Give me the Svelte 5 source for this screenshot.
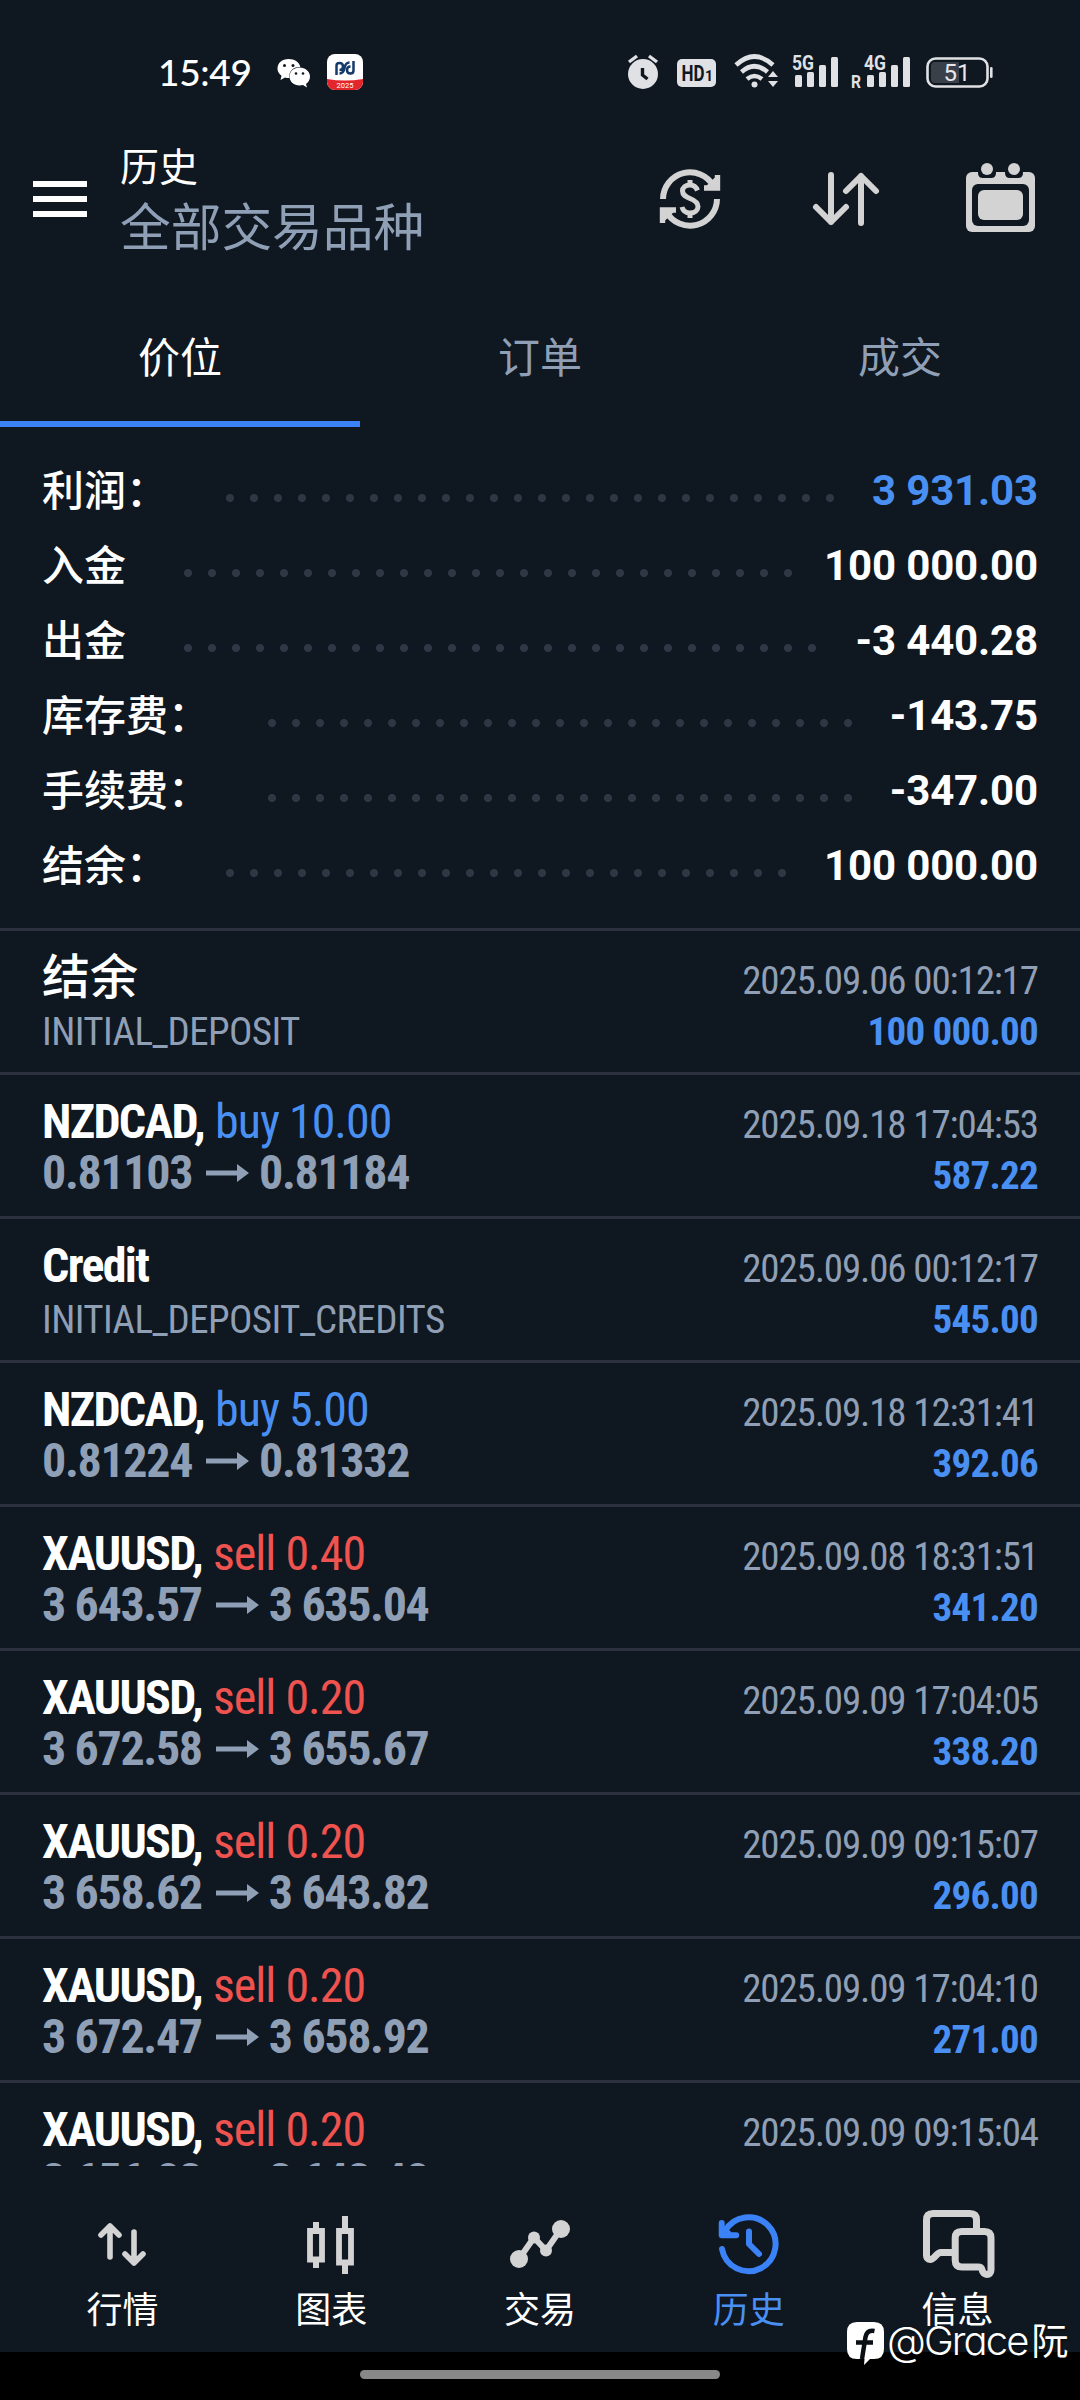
<script>
  let activeTab = "价位";
  let activePage = "history";

  const tabs = ["价位", "订单", "成交"];

  const summary = [
    { label: "利润：", value: "3 931.03", profit: true },
    { label: "入金", value: "100 000.00" },
    { label: "出金", value: "-3 440.28" },
    { label: "库存费：", value: "-143.75" },
    { label: "手续费：", value: "-347.00" },
    { label: "结余：", value: "100 000.00" },
  ];

  const deals = [
    { name: "结余", note: "INITIAL_DEPOSIT", time: "2025.09.06 00:12:17", profit: "100 000.00", cjk: true },
    { name: "NZDCAD", side: "buy", volume: "10.00", open: "0.81103", close: "0.81184", time: "2025.09.18 17:04:53", profit: "587.22" },
    { name: "Credit", note: "INITIAL_DEPOSIT_CREDITS", time: "2025.09.06 00:12:17", profit: "545.00" },
    { name: "NZDCAD", side: "buy", volume: "5.00", open: "0.81224", close: "0.81332", time: "2025.09.18 12:31:41", profit: "392.06" },
    { name: "XAUUSD", side: "sell", volume: "0.40", open: "3 643.57", close: "3 635.04", time: "2025.09.08 18:31:51", profit: "341.20" },
    { name: "XAUUSD", side: "sell", volume: "0.20", open: "3 672.58", close: "3 655.67", time: "2025.09.09 17:04:05", profit: "338.20" },
    { name: "XAUUSD", side: "sell", volume: "0.20", open: "3 658.62", close: "3 643.82", time: "2025.09.09 09:15:07", profit: "296.00" },
    { name: "XAUUSD", side: "sell", volume: "0.20", open: "3 672.47", close: "3 658.92", time: "2025.09.09 17:04:10", profit: "271.00" },
    { name: "XAUUSD", side: "sell", volume: "0.20", open: "3 656.83", close: "3 643.48", time: "2025.09.09 09:15:04" },
  ];

  const pages = [
    { id: "quotes", label: "行情" },
    { id: "charts", label: "图表" },
    { id: "trade", label: "交易" },
    { id: "history", label: "历史" },
    { id: "messages", label: "信息" },
  ];
</script>

<div class="screen">
  <div class="status">
    <span class="clock">15:49</span>
    <svg class="wechat" width="34" height="44" viewBox="0 0 34 44">
      <path d="M11.500 9C5 9 0.500 13 0.500 18.500c0 3 1.500 5.500 4 7.200L3.500 30l4.500-2.500c1.500.5 3 .6 4.500.5a10 9 0 0 1 10.800-11C22.500 12.500 18 9 11.500 9z" fill="#fff" />
      <path d="M22.500 17.500c-5.500 0-10 3.800-10 9s4.500 9 10 9c1.200 0 2.400-.2 3.500-.5l4 2.500-1-3.600c2.500-1.700 4-4.300 4-7.400 0-5-4.700-9-10.500-9z" fill="#fff" />
      <g fill="#0f1720">
        <circle cx="7.500" cy="15.500" r="1.500" />
        <circle cx="16" cy="15.500" r="1.500" />
        <circle cx="19" cy="23.500" r="1.300" />
        <circle cx="26" cy="23.500" r="1.300" />
      </g>
    </svg>
    <svg class="app" width="36" height="36" viewBox="0 0 36 36">
      <rect width="36" height="36" rx="8" fill="#fff" />
      <path d="M0 25q18 3 36 0v3a8 8 0 0 1-8 8H8a8 8 0 0 1-8-8z" fill="#e3262c" />
      <path d="M9.500 21v-9.500q0-2.500 3-2.500 3.500 0 3.500 3.500t-3.500 3.500M26.500 7v9.500q0 3-3 3-3.500 0-3.500-3.500t3.500-3.500M12.500 19.500q4 0 5-5.500t5-5.500" fill="none" stroke="#143a6b" stroke-width="2.500" />
      <text x="18" y="34" text-anchor="middle" font-size="7.500" fill="#fff">2025</text>
    </svg>

    <div class="signals">
      <svg width="34" height="44" viewBox="0 0 34 44" fill="#dfe1e4">
        <circle cx="17" cy="24" r="15" />
        <path d="M3 12l8-6M31 12l-8-6" stroke="#dfe1e4" stroke-width="3.400" />
        <path d="M16.500 18v7l5 4" fill="none" stroke="#0f1720" stroke-width="3.400" />
      </svg>
      <svg class="hd" width="39" height="44" viewBox="0 0 39 44">
        <rect y="9" width="39" height="28" rx="5" fill="#dfe1e4" />
        <text x="4.500" y="31" font-size="22" font-weight="700" fill="#0f1720" textLength="23" lengthAdjust="spacingAndGlyphs">HD</text>
        <text x="28" y="31" font-size="14" font-weight="700" fill="#0f1720">1</text>
      </svg>
      <svg class="wifi" width="46" height="44" viewBox="0 0 46 44" fill="none" stroke="#dfe1e4" stroke-width="4.600">
        <path d="M2 15q18.500-17 37 0M7.500 22q13-11.500 26 0M13 29q7.500-6 15 0" />
        <circle cx="20.500" cy="34.500" r="3" fill="#dfe1e4" stroke="none" />
        <path d="M34 27l5-6 5 6zM34 31l5 6 5-6z" fill="#dfe1e4" stroke="none" />
      </svg>
      <svg class="five" width="47" height="44" viewBox="0 0 47 44" fill="#dfe1e4">
        <text x="0" y="20" font-size="21" font-weight="700" textLength="22" lengthAdjust="spacingAndGlyphs">5G</text>
        <rect x="3" y="25" width="7" height="12" rx="1.500" />
        <rect x="15" y="22" width="7" height="15" rx="1.500" />
        <rect x="27" y="15" width="7" height="22" rx="1.500" />
        <rect x="39" y="7" width="7" height="30" rx="1.500" />
      </svg>
      <svg class="four" width="60" height="44" viewBox="0 0 60 44" fill="#dfe1e4">
        <text x="0" y="38" font-size="18" font-weight="700" textLength="10" lengthAdjust="spacingAndGlyphs">R</text>
        <text x="13" y="20" font-size="21" font-weight="700" textLength="22" lengthAdjust="spacingAndGlyphs">4G</text>
        <rect x="16" y="25" width="7" height="12" rx="1.500" />
        <rect x="28" y="22" width="7" height="15" rx="1.500" />
        <rect x="40" y="15" width="7" height="22" rx="1.500" />
        <rect x="52" y="7" width="7" height="30" rx="1.500" />
      </svg>
      <svg class="battery" width="68" height="44" viewBox="0 0 68 44">
        <rect x="1.500" y="8.500" width="60" height="28" rx="8" fill="none" stroke="#dfe1e4" stroke-width="2.600" />
        <path d="M5 16q0-4 4-4h24v21H9q-4 0-4-4z" fill="#3a4049" />
        <rect x="64" y="17" width="2.600" height="11" rx="1.300" fill="#dfe1e4" />
        <text x="31" y="31" text-anchor="middle" font-size="24" fill="#e6e8ea">51</text>
      </svg>
    </div>
  </div>

  <header>
    <button class="menu" aria-label="menu"><i></i><i></i><i></i></button>
    <div class="heading">
      <h1>历史</h1>
      <p>全部交易品种</p>
    </div>
    <svg class="currency" width="60" height="60" viewBox="0 0 60 60" fill="none" stroke="#d3d3d3" stroke-width="6">
      <path d="M3 30a27 27 0 0 1 50.500-13M57 30a27 27 0 0 1-50.500 13" />
      <path d="M44 19h13.500V6zM16 41H2.500v13z" fill="#d3d3d3" stroke="none" />
      <path d="M44 19h13.500V6M16 41H2.500v13" stroke-width="5.400" />
      <path d="M37.500 21.500c-1.500-4-4.500-5.500-7.500-5.500-4.500 0-7.500 2.500-7.500 6 0 4 3 5.500 7.500 7.500 5 2 8 4 8 8 0 3.500-3 6.500-8 6.500-4 0-7-2-8-6" stroke-width="5" />
      <path d="M30 11v6M30 43v6" stroke-width="5" />
    </svg>
    <svg class="sort" width="66" height="54" viewBox="0 0 66 54" fill="none" stroke="#d3d3d3" stroke-width="6" stroke-linecap="round" stroke-linejoin="round">
      <path d="M18 3v47M3 35l15 15 15-15M48 51V4M33 19L48 4l15 15" />
    </svg>
    <svg class="calendar" width="69" height="69" viewBox="0 0 69 69">
      <rect y="9" width="69" height="60" rx="6" fill="#d3d3d3" />
      <rect x="6" y="21" width="57" height="42" rx="6" fill="#0f1720" />
      <rect x="12" y="27" width="45" height="30" rx="6" fill="#d3d3d3" />
      <path d="M12 7h18v3q0 5-5 5h-8q-5 0-5-5zM39 7h18v3q0 5-5 5h-8q-5 0-5-5z" fill="#0f1720" />
      <circle cx="21" cy="6" r="6" fill="#d3d3d3" />
      <circle cx="48" cy="6" r="6" fill="#d3d3d3" />
    </svg>
  </header>

  <div class="tabs">
    {#each tabs as tab}
      <button class="tab" class:active={tab === activeTab} on:click={() => (activeTab = tab)}>{tab}</button>
    {/each}
  </div>

  <div class="summary">
    {#each summary as item}
      <div class="line">
        <span class="label">{item.label}</span>
        <span class="dots"></span>
        <span class="value" class:profit={item.profit}>{item.value}</span>
      </div>
    {/each}
  </div>

  <div class="deals">
    {#each deals as deal}
      <div class="deal">
        <div class="pair">
          <span class="title" class:cjk={deal.cjk}>
            <b>{deal.name}{deal.side ? "," : ""}</b>{#if deal.side}<span class={deal.side}>{deal.side} {deal.volume}</span>{/if}
          </span>
          <span class="time">{deal.time}</span>
        </div>
        <div class="pair">
          {#if deal.note}
            <span class="note">{deal.note}</span>
          {:else}
            <span class="prices">
              {deal.open}<svg width="43" height="18" viewBox="0 0 43 18"><path d="M0 6.500h31V0l12 9-12 9v-6.500H0z" fill="#8f9fb5" /></svg>{deal.close}
            </span>
          {/if}
          {#if deal.profit}
            <span class="amount">{deal.profit}</span>
          {/if}
        </div>
      </div>
    {/each}
  </div>

  <nav>
    {#each pages as page}
      <button class="page" class:active={page.id === activePage} on:click={() => (activePage = page.id)}>
        <svg width="78" height="72" viewBox="0 0 78 72" fill="none" stroke="#d3d3d3" stroke-width="6" stroke-linecap="round" stroke-linejoin="round">
          {#if page.id === "quotes"}
            <path d="M27 49V18M18 27l9-9 9 9M51 24v31M42 46l9 9 9-9" stroke-width="5.600" />
          {:else if page.id === "charts"}
            <g stroke-linecap="butt" stroke-linejoin="miter">
              <path d="M18 23h12v28.500H18zM47 23h12v31.500H47z" stroke-width="5.800" />
              <path d="M24 14v7M24 53v7M53 8v13M53 56v10" />
            </g>
          {:else if page.id === "trade"}
            <path d="M18 51l15-21.500 12 13L60 21" />
            <g fill="#d3d3d3" stroke="none">
              <circle cx="18" cy="51" r="9" />
              <circle cx="33" cy="29.500" r="6" />
              <circle cx="45" cy="42.500" r="6" />
              <circle cx="60" cy="21" r="9" />
            </g>
          {:else if page.id === "history"}
            <path d="M12 41A27 27 0 1 0 15 23" stroke="#3b82f6" />
            <path d="M11.700 15v12.300h14.500M12 20l7 6" stroke="#3b82f6" />
            <path d="M39 23.500V36l10 10" stroke="#3b82f6" />
          {:else}
            <path d="M34 44.500H22c-5 0-6 7-11 7-2.500 0-3.500-2-3.500-4V12q0-6.500 6.500-6.500h37q6.500 0 6.500 6.500v9" stroke-width="7" stroke-linecap="butt" />
            <path d="M42.500 23.500h23q6.500 0 6.500 6.500v32c0 6-8 6-9-.5-.5-2-2-2.500-4-2.500H43q-6.800 0-6.800-6.800V30q0-6.500 6.300-6.500z" stroke-width="7" />
          {/if}
        </svg>
        <span>{page.label}</span>
      </button>
    {/each}
  </nav>

  <div class="gesture"><i></i></div>

  <div class="watermark">
    <svg width="37" height="43" viewBox="0 0 37 43">
      <path d="M10 0h17q10 0 10 10v17q0 10-10 10h-4l-6 6 .5-6H10Q0 37 0 27V10Q0 0 10 0z" fill="#fff" />
      <path d="M27.500 9q-7.500-1.500-9 6L15 37M9 20.500h17" fill="none" stroke="#0a0f15" stroke-width="4.500" />
    </svg>
    <span>@Grace<em>阮</em></span>
  </div>
</div>

<style>
  :global(body) {
    background: #0f1720;
  }

  .screen {
    position: relative;
    width: 1080px;
    height: 2400px;
    overflow: hidden;
    display: flex;
    flex-direction: column;
    background: #0f1720;
    color: #fff;
    font-family: Roboto, "Noto Sans CJK SC", sans-serif;
  }

  svg {
    display: block;
    flex: none;
    overflow: visible;
  }

  button {
    padding: 0;
    border: 0;
    background: none;
    color: inherit;
    font: inherit;
  }

  .status {
    display: flex;
    align-items: center;
    height: 44px;
    padding: 50px 86px 0 158px;
  }

  .clock {
    width: 119px;
    font-family: Lato, sans-serif;
    font-size: 37px;
    font-weight: 500;
    line-height: 44px;
    letter-spacing: -0.3px;
  }

  .app {
    margin-left: 16px;
  }

  .signals {
    display: flex;
    margin-left: auto;
  }

  .hd {
    margin-left: 17px;
  }

  .wifi {
    margin-left: 18px;
  }

  .five {
    margin-left: 12px;
  }

  .four {
    margin-left: 12px;
  }

  .battery {
    margin-left: 15px;
  }

  header {
    display: flex;
    align-items: center;
    height: 210px;
    box-sizing: border-box;
    padding: 0 45px 0 33px;
  }

  .menu {
    display: flex;
    flex-direction: column;
    gap: 9px;
    width: 54px;
  }

  .menu i {
    height: 6px;
    background: #fff;
  }

  .heading {
    flex: 1;
    margin-left: 33px;
    padding-top: 4px;
  }

  h1 {
    margin: 0;
    font-size: 39px;
    font-weight: 400;
    line-height: 56px;
  }

  .heading p {
    margin: 0;
    color: #8f9fb5;
    font-size: 50.700px;
    line-height: 66px;
  }

  .sort {
    margin-left: 93px;
  }

  .calendar {
    margin-left: 87px;
    margin-bottom: 3px;
  }

  .tabs {
    display: flex;
    height: 123px;
  }

  .tab {
    flex: 1;
    padding-bottom: 17px;
    border-bottom: 6px solid transparent;
    color: #8f9fb5;
    font-size: 42px;
  }

  .tab.active {
    border-color: #3b82f6;
    color: #fff;
  }

  .summary {
    height: 501px;
    box-sizing: border-box;
    padding: 27px 42px 0;
  }

  .line {
    display: flex;
    height: 75px;
    line-height: 75px;
    font-size: 42px;
  }

  .label {
    font-weight: 500;
  }

  .dots {
    flex: 1;
    margin: 0 29px 0 50px;
    background: radial-gradient(circle at 12px 44px, #2f3744 3.600px, transparent 4.400px) 0 0 / 24px 75px repeat-x;
  }

  .value {
    margin-top: -1px;
    font-weight: 700;
    letter-spacing: -0.150px;
  }

  .value.profit,
  .amount,
  .buy {
    color: #4a90f2;
  }

  .sell {
    color: #ef5350;
  }

  .deals {
    height: 1238px;
    overflow: hidden;
  }

  .deal {
    height: 144px;
    box-sizing: border-box;
    padding: 21px 42px 0;
    border-top: 3px solid #2b323e;
    font-stretch: 75%;
    font-family: "Roboto Condensed", Roboto, "Noto Sans CJK SC", sans-serif;
  }

  .pair {
    display: flex;
    justify-content: space-between;
    align-items: baseline;
    height: 51px;
    line-height: 51px;
    white-space: nowrap;
  }

  .title {
    display: flex;
    gap: 11px;
    font-size: 48px;
    letter-spacing: -1px;
  }

  .title b {
    letter-spacing: -1.700px;
  }

  .title.cjk b {
    font-weight: 500;
    letter-spacing: 0;
  }

  .prices {
    display: flex;
    align-items: center;
    color: #8f9fb5;
    font-size: 48px;
    font-weight: 700;
    letter-spacing: -1.350px;
  }

  .prices svg {
    margin: 0 10px 0 14px;
  }

  .time,
  .note {
    color: #8f9fb5;
    font-size: 39px;
  }

  .time {
    letter-spacing: -1.130px;
  }

  .note {
    line-height: 58px;
    letter-spacing: -0.600px;
  }

  .amount {
    font-size: 39px;
    font-weight: 700;
    letter-spacing: -0.750px;
  }

  nav {
    display: flex;
    height: 186px;
    box-sizing: border-box;
    padding: 42px 18px 0;
  }

  .page {
    display: flex;
    flex: 1;
    flex-direction: column;
    align-items: center;
  }

  .page span {
    padding-top: 3px;
    font-size: 36px;
    line-height: 56px;
  }

  .page.active span {
    color: #4a90f2;
  }

  .gesture {
    display: flex;
    justify-content: center;
    height: 48px;
    box-sizing: border-box;
    padding-top: 18px;
    background: #000;
  }

  .gesture i {
    width: 360px;
    height: 9px;
    border-radius: 5px;
    background: #888;
  }

  .watermark {
    position: absolute;
    top: 2315px;
    left: 847px;
    display: flex;
    align-items: center;
    gap: 3px;
    font-family: Inter, sans-serif;
    font-feature-settings: "cv11";
    font-size: 40px;
    font-weight: 300;
    line-height: 48px;
    letter-spacing: -1.900px;
    white-space: nowrap;
    text-shadow: 1px 1px 3px rgba(0, 0, 0, 0.6);
  }

  .watermark svg {
    margin-top: 6px;
  }

  .watermark em {
    margin-left: 4px;
    font-family: "Noto Sans CJK SC", sans-serif;
    font-size: 37px;
    font-style: normal;
    font-weight: 400;
    letter-spacing: 0;
  }
</style>
